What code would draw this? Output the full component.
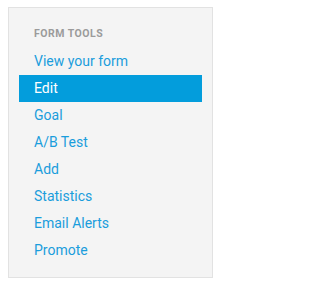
const items = [
  "View your form",
  "Edit",
  "Goal",
  "A/B Test",
  "Add",
  "Statistics",
  "Email Alerts",
  "Promote",
];

const App = () => {
  const active = "Edit";
  return (
    <div className="pl-[8px] pt-[7px] font-['Roboto',sans-serif]">
      <div className="h-[271px] w-[205px] border border-[#e2e2e2] bg-[#f4f4f4] pt-[20px]">
        <div className="mb-[8px] pl-[25px] text-[10.5px] font-bold uppercase leading-[12px] tracking-[0.5px] text-[#9b9b9b]">
          Form Tools
        </div>
        <ul className="ml-[10px] w-[183px]">
          {items.map((item) => (
            <li
              key={item}
              className={
                item === active
                  ? "h-[27px] bg-[#039ddc] pl-[15px] text-[14px] leading-[27px] text-white"
                  : "h-[27px] pl-[15px] text-[14px] leading-[27px] text-[#1a9ddc]"
              }
            >
              {item}
            </li>
          ))}
        </ul>
      </div>
    </div>
  );
};

export default App;
